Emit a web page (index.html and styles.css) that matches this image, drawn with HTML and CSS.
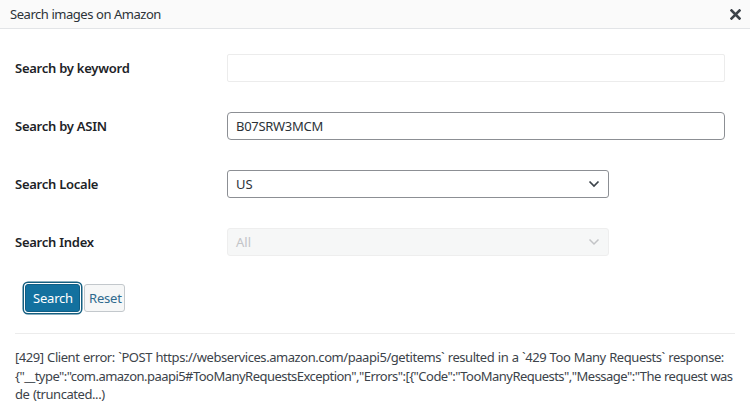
FILE: index.html
```html
<!DOCTYPE html>
<html>
<head>
<meta charset="utf-8">
<link rel="stylesheet" href="styles.css">
</head>
<body>
<div class="modal">
  <div class="modal-header">
    <span class="modal-title">Search images on Amazon</span>
    <button class="close" aria-label="Close">
      <svg width="11" height="11" viewBox="0 0 11 11"><path d="M1.5 1.5L9.5 9.5M9.5 1.5L1.5 9.5" stroke="#3c434a" stroke-width="2.6" stroke-linecap="square"/></svg>
    </button>
  </div>
  <div class="modal-body">
    <div class="form">
      <label class="label">Search by keyword</label>
      <div class="field"><input class="input input-light" type="text" value=""></div>
      <label class="label">Search by ASIN</label>
      <div class="field"><input class="input" type="text" value="B07SRW3MCM"></div>
      <label class="label">Search Locale</label>
      <div class="field">
        <div class="select-wrap">
          <div class="select">US</div>
          <svg class="chev" width="12" height="8" viewBox="0 0 12 8"><path d="M1.5 1.5L6 6L10.5 1.5" fill="none" stroke="#3c434a" stroke-width="1.7"/></svg>
        </div>
      </div>
      <label class="label">Search Index</label>
      <div class="field">
        <div class="select-wrap">
          <div class="select disabled">All</div>
          <svg class="chev" width="12" height="8" viewBox="0 0 12 8"><path d="M1.5 1.5L6 6L10.5 1.5" fill="none" stroke="#c3c4c7" stroke-width="1.5"/></svg>
        </div>
      </div>
    </div>
    <div class="actions">
      <button class="btn btn-primary">Search</button>
      <button class="btn btn-secondary">Reset</button>
    </div>
    <hr class="sep">
    <p class="error"><span class="line">[429] Client error: `POST https://webservices.amazon.com/paapi5/getitems` resulted in a `429 Too Many Requests` response:</span><span class="line line-tight">{"__type":"com.amazon.paapi5#TooManyRequestsException","Errors":[{"Code":"TooManyRequests","Message":"The request was</span><span class="line">de (truncated...)</span></p>
  </div>
</div>
</body>
</html>
```
FILE: styles.css
```css
* { box-sizing: border-box; }
html, body { margin: 0; padding: 0; background: #fff; }
body {
  font-family: "Noto Sans", "Open Sans", sans-serif;
  font-size: 13px;
  color: #1d2327;
  width: 750px;
  height: 408px;
  overflow: hidden;
}
.modal-header {
  height: 29px;
  background: #fafafa;
  border-bottom: 1px solid #e2e4e7;
  display: flex;
  align-items: center;
  justify-content: space-between;
  padding: 0 8px 0 10px;
}
.modal-title {
  font-size: 13px;
  color: #2c3338;
  letter-spacing: -0.45px;
}
.close {
  border: 0;
  background: none;
  padding: 0;
  width: 14px;
  height: 14px;
  display: flex;
  align-items: center;
  justify-content: center;
}
.modal-body { padding: 0 15px; }
.form {
  display: grid;
  grid-template-columns: 212px 1fr;
  grid-auto-rows: 58px;
  margin-top: 10px;
}
.label {
  display: flex;
  align-items: center;
  font-weight: 600;
  font-size: 13px;
  color: #1d2327;
  letter-spacing: -0.25px;
}
.field { display: flex; align-items: center; }
.input {
  width: 498px;
  height: 28px;
  border: 1px solid #8c8f94;
  border-radius: 4px;
  padding: 0 8px;
  font-family: inherit;
  font-size: 13px;
  color: #2c3338;
  background: #fff;
  letter-spacing: -0.3px;
}
.input-light { border-color: #ececec; border-radius: 2px; }
.select-wrap { position: relative; width: 382px; }
.select {
  height: 28px;
  border: 1px solid #8c8f94;
  border-radius: 3px;
  padding: 0 8px;
  display: flex;
  align-items: center;
  color: #2c3338;
  background: #fff;
}
.select.disabled {
  background: #f6f7f7;
  border-color: #eeeeee;
  color: #c3c4c7;
}
.chev { position: absolute; right: 9px; top: 10px; }
.actions {
  display: flex;
  align-items: center;
  gap: 4px;
  margin-top: 13px;
  padding-left: 10px;
}
.btn {
  height: 28px;
  font-family: inherit;
  font-size: 13px;
  border-radius: 3px;
  padding: 0 7px;
  letter-spacing: -0.2px;
}
.btn-primary {
  background: #13719f;
  color: #fff;
  border: 1px solid #0f5e85;
  width: 55px;
  box-shadow: 0 0 0 1px #fff, 0 0 0 2.5px #135e80;
}
.btn-secondary {
  background: #f6f7f7;
  color: #2e6a8e;
  border: 1px solid #c3c8cc;
  width: 41px;
  padding: 0 4px;
}
.sep {
  border: 0;
  border-top: 1px solid #ececec;
  margin: 21px 0 0;
}
.error {
  margin: 14px 0 0;
  font-size: 13px;
  line-height: 18.5px;
  color: #3c434a;
  letter-spacing: -0.44px;
  word-spacing: 0.5px;
}
.line { display: block; white-space: nowrap; }
.error .line-tight { letter-spacing: -0.53px; word-spacing: 0.5px; }
```
